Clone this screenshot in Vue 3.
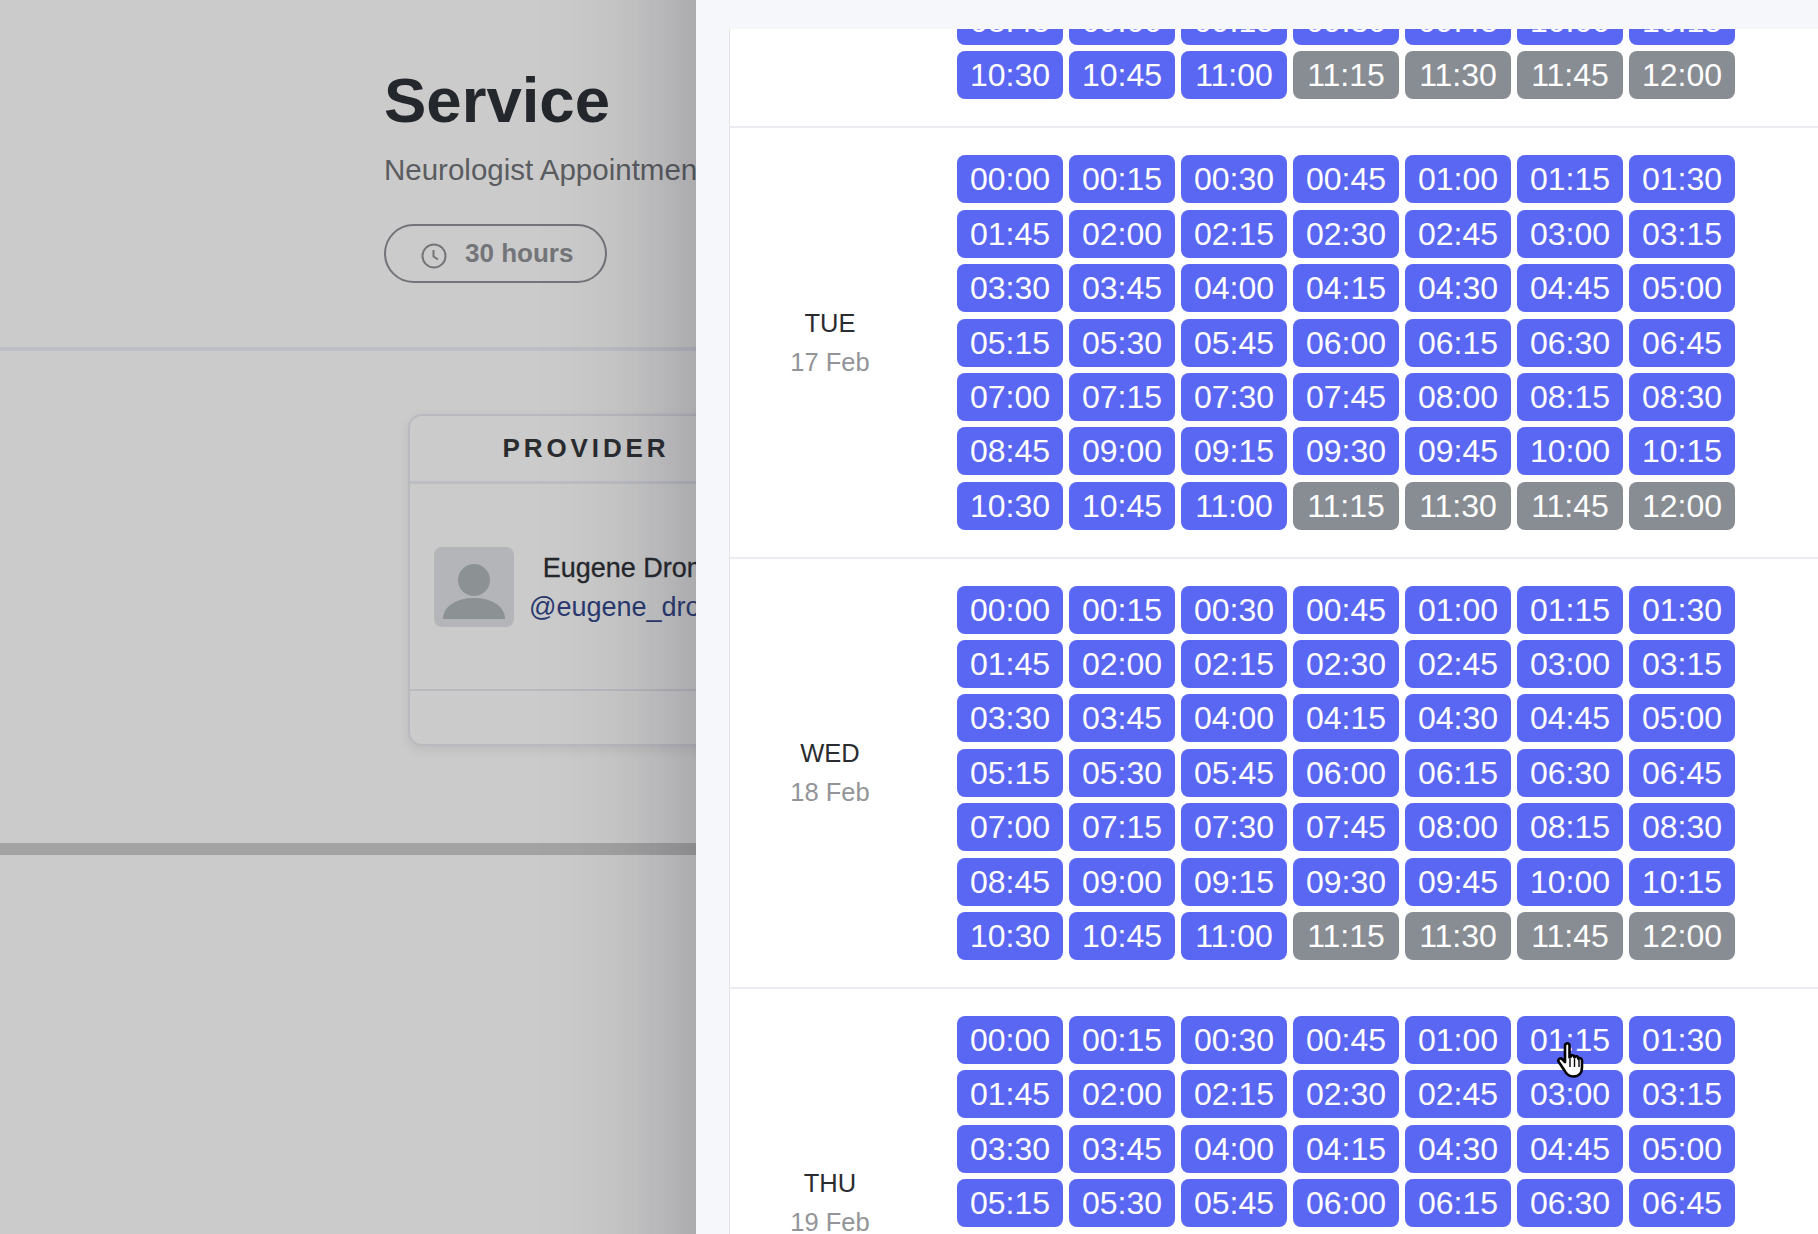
<script setup>
const slots = []
for (let m = 0; m <= 720; m += 15) {
  const h = String(Math.floor(m / 60)).padStart(2, '0')
  const mm = String(m % 60).padStart(2, '0')
  slots.push({ label: `${h}:${mm}`, off: m >= 675 })
}
const days = [
  { d: 'MON', date: '16 Feb' },
  { d: 'TUE', date: '17 Feb' },
  { d: 'WED', date: '18 Feb' },
  { d: 'THU', date: '19 Feb' }
]
</script>

<template>
  <div class="page">
    <main class="service">
      <header class="head">
        <h1>Service</h1>
        <p class="sub">Neurologist Appointment</p>
        <div class="pill">
          <svg class="clock" viewBox="0 0 26 26" width="26" height="26">
            <circle cx="13" cy="13" r="11.5" fill="none" stroke="#737579" stroke-width="2" />
            <path d="M12.5 7v6.5l4.5 3" fill="none" stroke="#737579" stroke-width="2" />
          </svg>
          <span>30 hours</span>
        </div>
      </header>
      <section class="below">
        <div class="card">
          <div class="card-head">PROVIDER</div>
          <div class="card-body">
            <div class="avatar">
              <svg viewBox="0 0 80 80" width="80" height="80">
                <circle cx="40" cy="33" r="16" fill="#8c9193" />
                <path d="M9 72c0-13 14-21 31-21s31 8 31 21z" fill="#8c9193" />
              </svg>
            </div>
            <div class="who">
              <div class="name">Eugene Dromov</div>
              <div class="handle">@eugene_dromov</div>
            </div>
          </div>
          <div class="card-foot"></div>
        </div>
      </section>
      <div class="bar"></div>
    </main>

    <aside class="drawer">
      <div class="panel">
        <div class="list">
          <div v-for="day in days" :key="day.d" class="day">
            <div class="label">
              <div class="dow">{{ day.d }}</div>
              <div class="date">{{ day.date }}</div>
            </div>
            <div class="grid">
              <button v-for="s in slots" :key="s.label" class="slot" :class="{ off: s.off }">{{ s.label }}</button>
            </div>
          </div>
        </div>
      </div>
      <svg class="cursor" viewBox="0 0 30 38" width="30" height="38">
        <path d="M10 3c1.500-1.500 3.500-.500 3.500 1.500v12l1-.5c0-2 3-2.500 3.500-.5l.5 1c.5-2 3.500-1.500 3.500.5l.500 1c.5-1.500 3.500-1 3.500 1.500v7c0 5-3 9-8.500 9-5 0-7-2-9-6l-6-9c-1-2 1.500-4 3.500-2.500l3 3V5c0-1 0-1.500.500-2z" fill="#fff" stroke="#000" stroke-width="2.600" stroke-linejoin="round" />
        <path d="M14 18v8M18.500 18v8M23 19v7" stroke="#000" stroke-width="1.400" fill="none" />
      </svg>
    </aside>
  </div>
</template>

<style scoped>
.page {
  position: relative;
  width: 1818px;
  height: 1234px;
  overflow: hidden;
  background: #cbcbcb;
  font-family: "Liberation Sans", Arial, sans-serif;
}
.service {
  width: 696px;
  display: flex;
  flex-direction: column;
}
.head {
  height: 351px;
  padding: 64px 0 0 384px;
  box-sizing: border-box;
  border-bottom: 4px solid #bcbec3;
  white-space: nowrap;
}
h1 {
  margin: 0;
  font-size: 63.500px;
  line-height: 72px;
  font-weight: 700;
  color: #24272b;
}
.sub {
  margin: 16px 0 0;
  font-size: 29.500px;
  line-height: 36px;
  color: #5a5c60;
}
.pill {
  margin-top: 36px;
  width: 223px;
  height: 59px;
  box-sizing: border-box;
  border: 2px solid #727479;
  border-radius: 30px;
  display: flex;
  align-items: center;
  padding-left: 35px;
  gap: 18px;
  color: #737579;
  font-size: 26px;
  font-weight: 700;
}
.clock { margin-top: 5px; }
.below {
  height: 492px;
  padding: 63px 0 0 408px;
  box-sizing: border-box;
}
.card {
  width: 400px;
  height: 332px;
  box-sizing: border-box;
  border: 2px solid #b8babe;
  border-radius: 14px;
  display: flex;
  flex-direction: column;
  box-shadow: 0 4px 12px rgba(0, 0, 0, .08);
}
.card-head {
  height: 68px;
  box-sizing: border-box;
  border-bottom: 3px solid #bcbec3;
  text-align: center;
  line-height: 64px;
  font-size: 26px;
  font-weight: 700;
  letter-spacing: 3.900px;
  color: #2a2c30;
  padding-right: 44px;
}
.card-body {
  height: 205px;
  display: flex;
  align-items: center;
  gap: 15px;
  padding-left: 24px;
  white-space: nowrap;
}
.avatar {
  width: 80px;
  height: 80px;
  flex: none;
  border-radius: 8px;
  background: #b3b5b8;
  overflow: hidden;
}
.who {
  text-align: center;
  font-size: 27px;
  line-height: 39px;
  padding-top: 2px;
}
.name {
  color: #26282c;
  -webkit-text-stroke: .3px #26282c;
}
.handle { color: #2a3a70; }
.card-foot {
  flex: 1;
  border-top: 2px solid #b8babe;
}
.bar {
  height: 12px;
  background: #a3a3a3;
}
.drawer {
  position: absolute;
  left: 696px;
  top: -200px;
  width: 1122px;
  height: 1634px;
  box-sizing: border-box;
  padding: 229px 0 200px 33px;
  background: #f5f7fb;
  box-shadow: 0 0 130px rgba(30, 30, 50, .36);
}
.panel {
  height: 100%;
  background: #fff;
  border-left: 1px solid #e4e5ea;
  overflow: hidden;
}
.list { margin-top: -331px; }
.day {
  display: flex;
  align-items: center;
  border-bottom: 2px solid #ebecf2;
  padding: 27px 0;
}
.label {
  width: 200px;
  margin-right: 27px;
  flex: none;
  text-align: center;
  font-size: 25.500px;
}
.dow { color: #2a2c30; line-height: 39px; }
.date { color: #929498; line-height: 39px; }
.grid {
  display: grid;
  grid-template-columns: repeat(7, 106px);
  column-gap: 6px;
  row-gap: 6.400px;
}
.slot {
  height: 48px;
  padding: 0;
  border: 0;
  border-radius: 8px;
  background: #5a67f2;
  color: #fff;
  font: 32px/48px "Liberation Sans", Arial, sans-serif;
}
.slot.off { background: #888c93; }
.cursor {
  position: absolute;
  left: 860px;
  top: 1241px;
}
</style>
